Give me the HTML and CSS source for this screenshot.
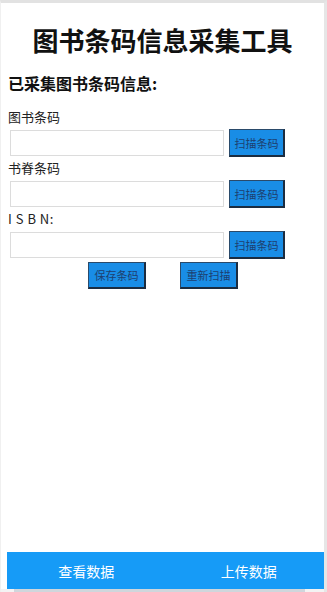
FILE: index.html
```html
<!DOCTYPE html>
<html lang="zh">
<head>
<meta charset="utf-8">
<title>图书条码信息采集工具</title>
<link rel="stylesheet" href="styles.css">
</head>
<body>
<div class="frame">
  <div class="page">
    <h1 class="title">图书条码信息采集工具</h1>
    <h2 class="subtitle">已采集图书条码信息:</h2>
    <div class="fields">
      <div class="field">
        <div class="label">图书条码</div>
        <div class="row">
          <input class="input" type="text">
          <button class="scan">扫描条码</button>
        </div>
      </div>
      <div class="field">
        <div class="label">书脊条码</div>
        <div class="row">
          <input class="input" type="text">
          <button class="scan">扫描条码</button>
        </div>
      </div>
      <div class="field">
        <div class="label isbn">I S B N:</div>
        <div class="row">
          <input class="input" type="text">
          <button class="scan">扫描条码</button>
        </div>
      </div>
    </div>
    <div class="actions">
      <button class="act">保存条码</button>
      <button class="act">重新扫描</button>
    </div>
    <div class="spacer"></div>
    <div class="bottombar">
      <div class="tab tab-left">查看数据</div>
      <div class="tab tab-right">上传数据</div>
    </div>
  </div>
  <div class="foot"><div class="footline"></div></div>
</div>
</body>
</html>
```

FILE: styles.css
```css
html, body {
  margin: 0;
  padding: 0;
  width: 327px;
  height: 592px;
  overflow: hidden;
  background: #ffffff;
  font-family: "Noto Sans CJK SC", "Noto Sans", sans-serif;
}
.frame {
  width: 327px;
  height: 592px;
  box-sizing: border-box;
  border-top: 3px solid #e2e2e2;
  border-right: 3px solid #e6e6e6;
  border-left: 1px solid #f0f0f0;
  display: flex;
  flex-direction: column;
}
.page {
  flex: 1;
  display: flex;
  flex-direction: column;
  background: #fff;
}
.title {
  margin: 22px 0 0 0;
  font-size: 26px;
  line-height: 30px;
  font-weight: 700;
  text-align: center;
  color: #111;
}
.subtitle {
  margin: 18px 0 0 7px;
  font-size: 16px;
  line-height: 20px;
  font-weight: 700;
  color: #111;
}
.fields {
  margin-top: 16px;
  display: flex;
  flex-direction: column;
  gap: 3px;
}
.label {
  margin-left: 7px;
  font-size: 13px;
  line-height: 16px;
  color: #222;
}
.label.isbn {
  letter-spacing: 0.5px;
}
.row {
  display: flex;
  align-items: center;
  margin-top: 4px;
  height: 28px;
}
.input {
  margin: 0 0 0 9px;
  width: 214px;
  height: 26px;
  box-sizing: border-box;
  border: 1px solid #dcdcdc;
  background: #fff;
  padding: 0;
}
.scan, .act {
  background: #198de6;
  border-top: 1px solid #2a4a6a;
  border-left: 1px solid #2a4a6a;
  border-right: 2px solid #1b2c40;
  border-bottom: 2px solid #1b2c40;
  color: #1d3f70;
  font-family: "Noto Sans CJK SC", sans-serif;
  font-size: 11px;
  padding: 0;
  box-sizing: border-box;
}
.scan {
  margin-left: 5px;
  width: 56px;
  height: 28px;
}
.actions {
  display: flex;
  justify-content: center;
  gap: 34px;
  margin-top: 3px;
  padding-left: 1px;
}
.act {
  width: 58px;
  height: 27px;
}
.spacer {
  flex: 1;
}
.bottombar {
  margin-left: 6px;
  height: 37px;
  background: #169bf7;
  display: flex;
  align-items: center;
}
.tab {
  flex: 1;
  text-align: center;
  color: #ffffff;
  font-size: 14px;
  line-height: 20px;
  padding-top: 1px;
}
.tab-left {
  padding-left: 4px;
}
.tab-right {
  padding-left: 12px;
}
.foot {
  height: 3px;
  background: #f3f3f3;
  padding-left: 13px;
}
.footline {
  width: 291px;
  height: 3px;
  background: #cfd6dc;
}
```
